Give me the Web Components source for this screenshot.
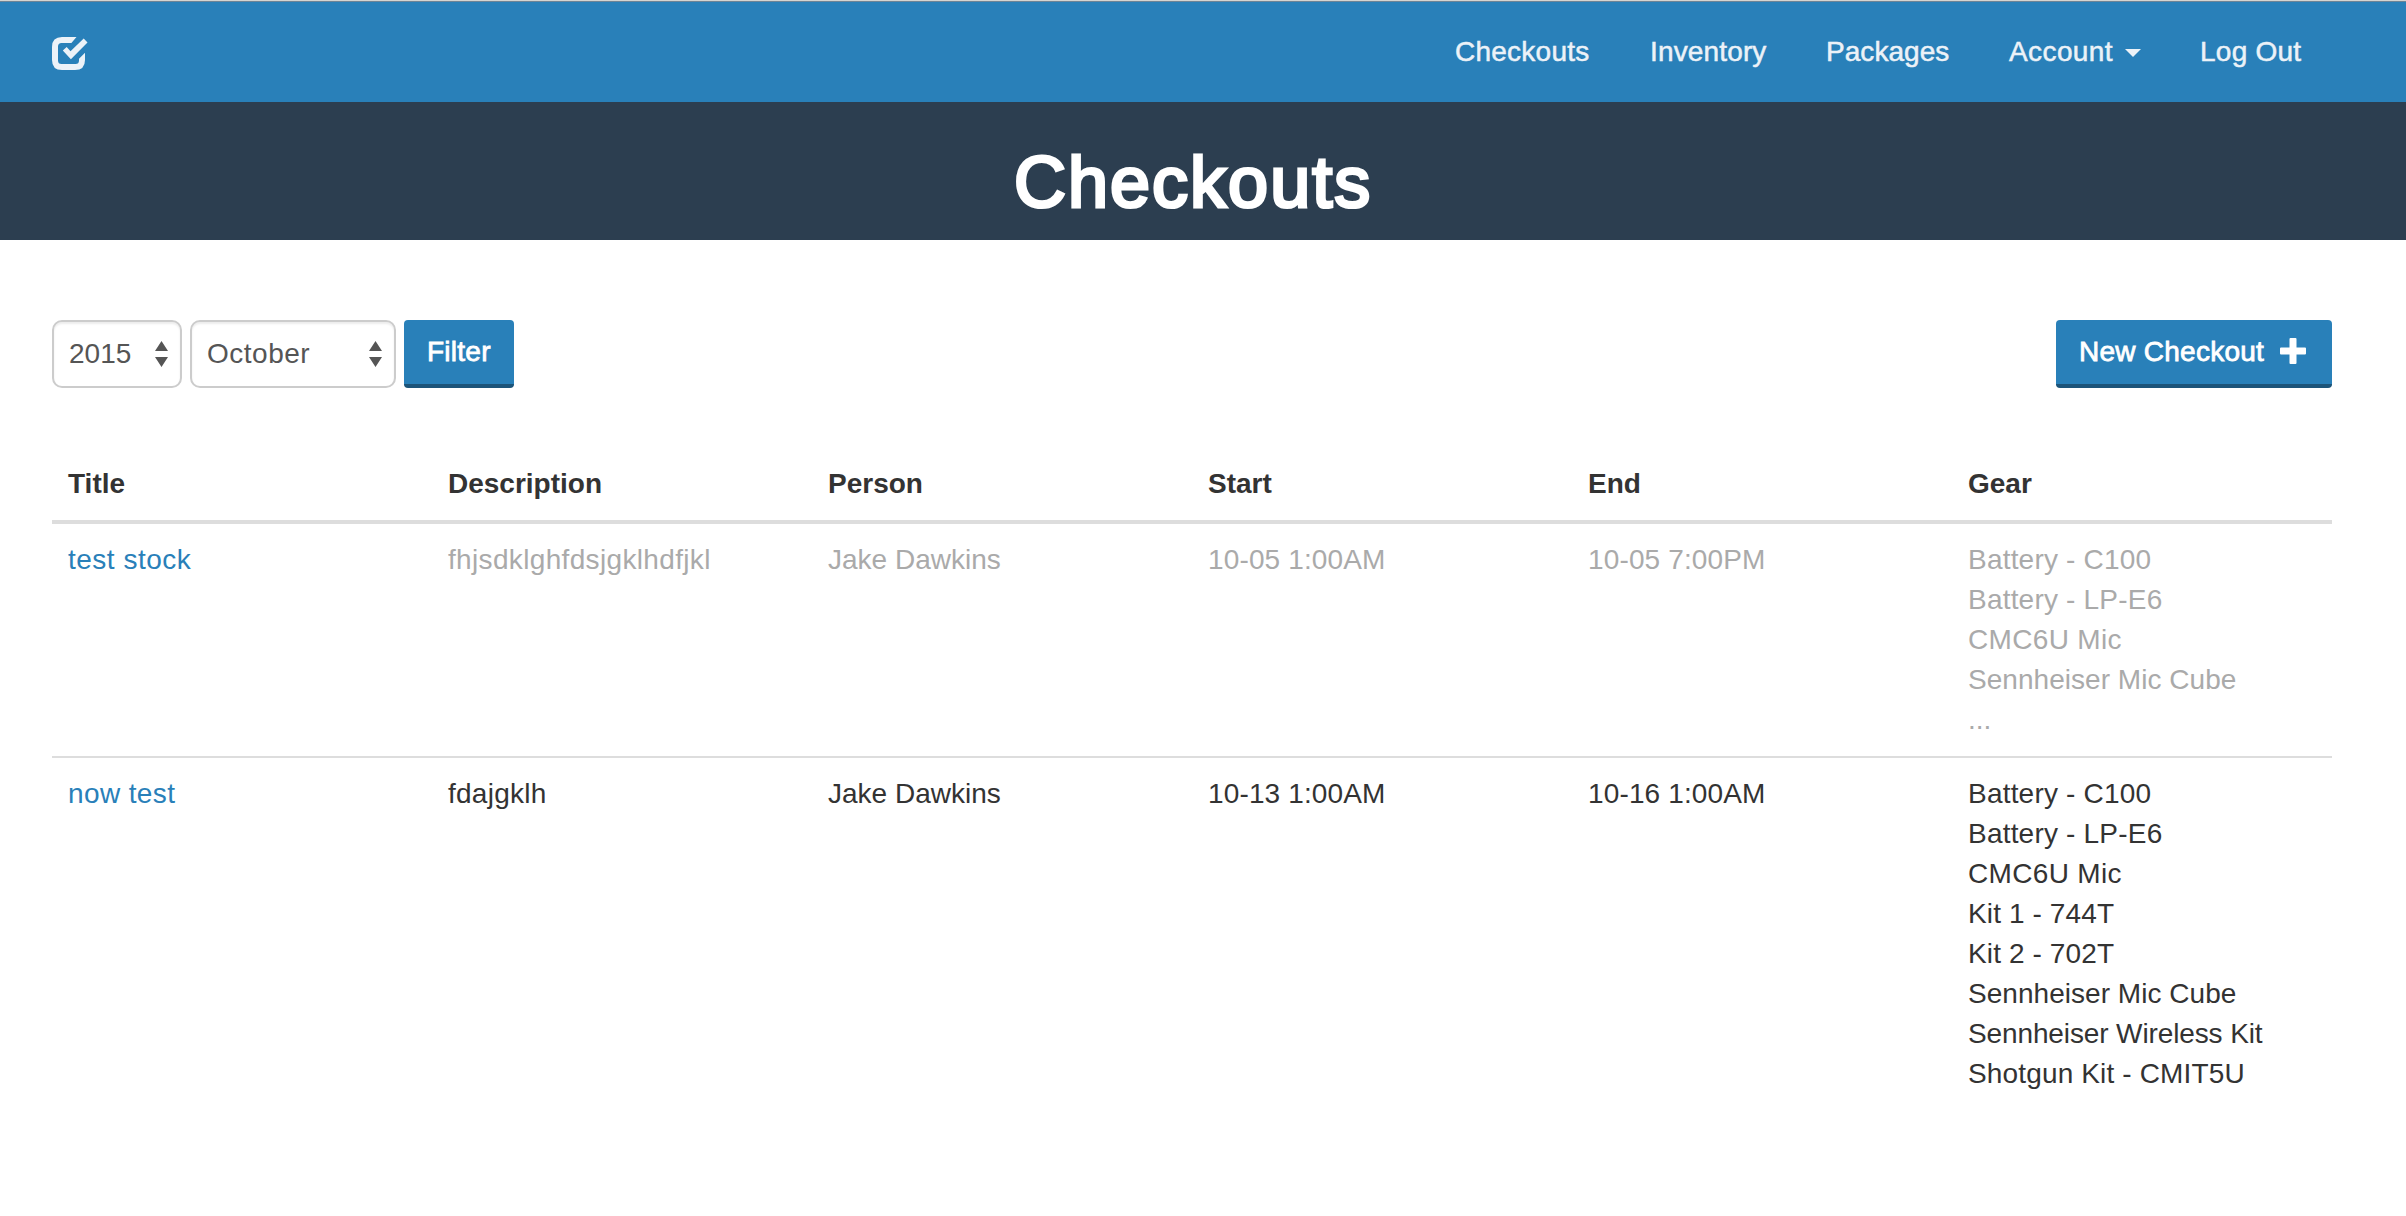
<!DOCTYPE html>
<html lang="en">
<head>
<meta charset="utf-8">
<title>Checkouts</title>
<style>
html,body{margin:0;background:#fff}
body{font:28px/40px "Liberation Sans",Arial,sans-serif;color:#333;min-height:1216px}
</style>
</head>
<body>
<checkout-app></checkout-app>
<script>
const define=(name,html)=>customElements.define(name,class extends HTMLElement{
  constructor(){super();this.attachShadow({mode:'open'}).innerHTML=html;}
});

define('app-logo',`<style>:host{display:block;width:36px;height:34px}svg{display:block}</style>
<svg width="36" height="34" viewBox="0 0 36 34" fill="#ecf2f8"><path d="M24.500 0H10Q0 0 0 10V23Q0 33 10 33H23Q33 33 33 23V15.800L27 21.700V23.500Q27 27 23.500 27H9.500Q6 27 6 23.500V9.500Q6 6 9.500 6H19.400Z"/><path d="M10.800 13.500L14.700 9.900L18.500 14.300L31.700 1.500L35.500 5.500L18.900 22.300Z"/></svg>`);

define('nav-link',`<style>:host{display:block;white-space:nowrap}a{color:#ecf2f8;-webkit-text-stroke:.5px #ecf2f8;letter-spacing:var(--track,.2px)}
i{display:none;margin-left:12px;vertical-align:4px;border:8px solid transparent;border-top-color:#ecf2f8;border-bottom:0}
:host([menu]) i{display:inline-block}</style><a><slot></slot></a><i></i>`);

define('nav-bar',`<style>:host{display:flex;box-sizing:border-box;height:102px;background:#2980b9;border-top:1px solid #d5d3d0;box-shadow:inset 0 1px #6d8496;padding:0 0 0 52px}
app-logo{margin-top:36px}nav{display:flex;margin-left:auto;padding-top:31px;width:951px}</style>
<app-logo></app-logo><nav>
<nav-link style="width:195px;--track:.25px">Checkouts</nav-link><nav-link style="width:176px;--track:.15px">Inventory</nav-link><nav-link style="width:183px;--track:.05px">Packages</nav-link><nav-link menu style="width:191px;--track:.4px">Account</nav-link><nav-link style="--track:.25px">Log Out</nav-link></nav>`);

define('page-title',`<style>:host{display:block;height:138px;background:#2c3e50}
h1{margin:0;padding:40px 0 0 1014px;font:400 72px/80px "Liberation Sans",Arial,sans-serif;color:#fff;letter-spacing:2px;-webkit-text-stroke:3.2px #fff}</style><h1><slot></slot></h1>`);

define('select-box',`<style>:host{display:flex;box-sizing:border-box;height:68px;border:2px solid #ccc;border-radius:10px;box-shadow:inset 0 2px 2px rgba(0,0,0,.075);padding:12px 12px 0 15px;justify-content:space-between;color:#555}
svg{margin-top:7px}span{letter-spacing:var(--track,0)}</style><span><slot></slot></span><svg width="13" height="26" viewBox="0 0 13 26" fill="#555"><path d="M0 10L6.500 0L13 10ZM0 16H13L6.500 26Z"/></svg>`);

define('action-button',`<style>:host{display:flex;box-sizing:border-box;height:68px;background:#2980b9;border-bottom:4px solid #1c5479;border-radius:4px;padding:12px 0 0 23px;color:#fff;white-space:nowrap}
span{-webkit-text-stroke:.8px #fff;letter-spacing:.25px}svg{display:none;margin:6px 0 0 auto}:host([plus]) svg{display:block}:host([plus]){padding-right:26px}</style>
<span><slot></slot></span><svg width="26" height="26" viewBox="0 0 26 26" fill="#fff"><path d="M10.500 0H15.500Q16.500 0 16.500 1V9.500H25Q26 9.500 26 10.500V15.500Q26 16.500 25 16.500H16.500V25Q16.500 26 15.500 26H10.500Q9.500 26 9.500 25V16.500H1Q0 16.500 0 15.500V10.500Q0 9.500 1 9.500H9.500V1Q9.500 0 10.500 0Z"/></svg>`);

define('tool-bar',`<style>:host{display:flex;height:68px;gap:8px}action-button[plus]{margin-left:auto}</style>
<select-box style="width:130px">2015</select-box><select-box style="width:206px;--track:.5px">October</select-box><action-button style="width:110px">Filter</action-button><action-button plus style="width:276px">New Checkout</action-button>`);

define('table-row',`<style>:host{display:grid;grid-template-columns:repeat(6,380px);border-top:2px solid #ddd}
:host([head]){border-top:0;border-bottom:4px solid #ddd;font-weight:700}
:host([first]){border-top:0}:host([past]){color:#aaa}
::slotted(*){padding:16px;white-space:nowrap}</style><slot></slot>`);

define('gear-item',`<style>:host{display:block;height:40px}</style><slot></slot>`);

define('checkout-table',`<style>:host{display:block;margin-top:60px}a{color:#2980b9}.date{letter-spacing:.14px}.battery{letter-spacing:.2px}.mic{letter-spacing:.33px}.cube{letter-spacing:.04px}.kit{letter-spacing:.12px}</style>
<table-row head><span>Title</span><span>Description</span><span>Person</span><span>Start</span><span>End</span><span>Gear</span></table-row>
<table-row first past><a style="letter-spacing:.5px">test stock</a><span style="letter-spacing:.34px">fhjsdklghfdsjgklhdfjkl</span><span>Jake Dawkins</span><span class="date">10-05 1:00AM</span><span class="date">10-05 7:00PM</span><div><gear-item class="battery">Battery - C100</gear-item><gear-item class="battery">Battery - LP-E6</gear-item><gear-item class="mic">CMC6U Mic</gear-item><gear-item class="cube">Sennheiser Mic Cube</gear-item><gear-item>...</gear-item></div></table-row>
<table-row><a style="letter-spacing:.38px">now test</a><span style="letter-spacing:.25px">fdajgklh</span><span>Jake Dawkins</span><span class="date">10-13 1:00AM</span><span class="date">10-16 1:00AM</span><div><gear-item class="battery">Battery - C100</gear-item><gear-item class="battery">Battery - LP-E6</gear-item><gear-item class="mic">CMC6U Mic</gear-item><gear-item class="kit">Kit 1 - 744T</gear-item><gear-item class="kit">Kit 2 - 702T</gear-item><gear-item class="cube">Sennheiser Mic Cube</gear-item><gear-item style="letter-spacing:-.12px">Sennheiser Wireless Kit</gear-item><gear-item style="letter-spacing:.15px">Shotgun Kit - CMIT5U</gear-item></div></table-row>`);

define('checkout-app',`<style>:host{display:block}main{padding:80px 74px 0 52px}</style>
<nav-bar></nav-bar><page-title>Checkouts</page-title><main><tool-bar></tool-bar><checkout-table></checkout-table></main>`);
</script>
</body>
</html>
